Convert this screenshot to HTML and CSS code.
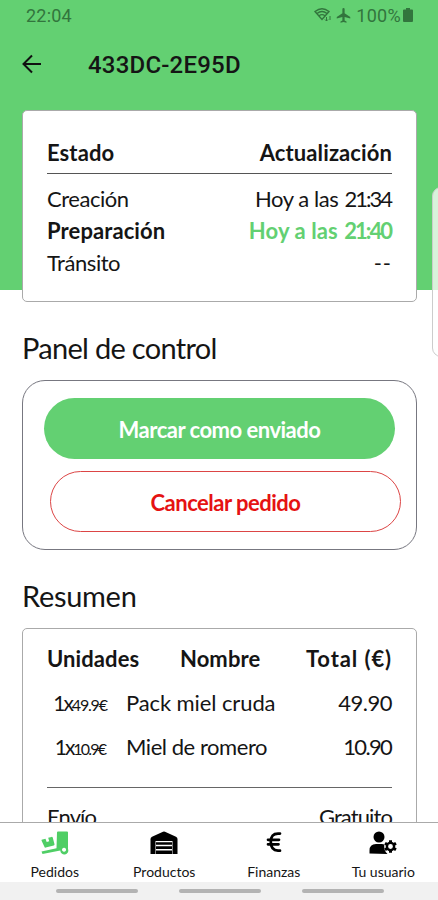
FILE: index.html
```
<!DOCTYPE html>
<html lang="es">

<head>
  <meta charset="UTF-8">
  <meta name="viewport" content="width=device-width, initial-scale=1.0">
  <title>Pedido 433DC-2E95D</title>
  <link rel="stylesheet" href="styles.css">
</head>

<body>
  <div class="app">
    <header>
      <div class="status">
        <span class="time">22:04</span>
        <svg class="wifi" viewBox="0 0 18 16" width="18" height="16">
          <g fill="none" stroke="currentColor" stroke-width="1.4">
            <path d="M1 4.500Q8-1 15 4.500L8 12.500z" />
            <path d="M3 6.500Q8 2.500 13 6.500M5 8.800Q8 6.500 11 8.800" />
            <path d="M12.500 10v4M11 12.500l1.500 1.500 1.500-1.500M16 13V9" stroke-width="1" />
          </g>
        </svg>
        <svg class="plane" viewBox="2 2 20 20" width="15" height="15">
          <path fill="currentColor" d="M21 16v-2l-7.500-5V3.500a1.500 1.500 0 0 0-3 0V9L3 14v2l7.500-2v4.500L8 20v1.500l4-1 4 1V20l-2.500-1.500V14z" />
        </svg>
        <span class="percent">100%</span>
        <svg class="battery" viewBox="0 0 10 14" width="10" height="14">
          <path fill="currentColor" d="M3 0h4v1.500h2q1 0 1 1V13q0 1-1 1H1q-1 0-1-1V2.500q0-1 1-1h2z" />
        </svg>
      </div>
      <div class="title">
        <svg viewBox="0 0 20 20" width="20" height="20">
          <path d="M19 10H2M10 1.500L1.500 10l8.500 8.500" fill="none" stroke="#111" stroke-width="2" />
        </svg>
        <h1>433DC-2E95D</h1>
      </div>
    </header>

    <main>
      <section class="card states">
        <div class="row head"><span>Estado</span><span>Actualización</span></div>
        <div class="row"><span>Creación</span><span>Hoy a las <b class="hour">21:34</b></span></div>
        <div class="row current"><span>Preparación</span><span class="date">Hoy a las <b class="hour">21:40</b></span></div>
        <div class="row"><span>Tránsito</span><span class="dashes">--</span></div>
      </section>

      <h2 class="control">Panel de control</h2>
      <section class="panel">
        <button class="send">Marcar como enviado</button>
        <button class="cancel">Cancelar pedido</button>
      </section>

      <h2>Resumen</h2>
      <section class="card summary">
        <div class="row head"><span>Unidades</span><span class="name">Nombre</span><span class="total">Total (€)</span></div>
        <div class="item"><span class="units">1x<small>49.9€</small></span><span>Pack miel cruda</span><span class="price">49.90</span></div>
        <div class="item"><span class="units second">1x<small>10.9€</small></span><span class="tight">Miel de romero</span><span class="price second">10.90</span></div>
        <hr>
        <div class="row shipping"><span>Envío</span><span>Gratuito</span></div>
      </section>
    </main>

    <nav>
      <a class="active">
        <svg viewBox="0 0 28 24" width="28" height="24">
          <path fill="currentColor" d="M16 1.500q0-1 1-1h9q1 0 1 1V18a4 4 0 1 1-7.700 1.500L1.500 23 .5 20.500 15.500 17.200zM23 16.700a2 2 0 1 0 .1 0z" fill-rule="evenodd" />
          <path fill="currentColor" d="M1.500 8.500l3-.8 1.200 3.300 2.500-.7-1-3.600 3.300-.8q1-.2 1.300.8l1.700 6.600q.2 1-.8 1.300l-8 2q-1 .2-1.300-.8L.5 9.500q-.2-.8 1-1z" />
        </svg>
        <span>Pedidos</span>
      </a>
      <a>
        <svg viewBox="0 0 28 24" width="28" height="24">
          <path fill="#000" d="M.5 23V8q0-1.500 1.500-2.200L13 .8q1-.5 2 0l11 5Q27.500 6.500 27.500 8v15h-5V10h-17v13z" />
          <path fill="#000" d="M6 11.300h16v2.500H6zM6 15.200h16v2.800H6zM6 19.400h16V23H6z" />
        </svg>
        <span>Productos</span>
      </a>
      <a>
        <svg viewBox="0 0 28 24" width="28" height="24">
          <path d="M20 2.600h-2Q10.800 2.600 10.800 11t7.200 8.700h2M8 8.800h11M8 13.300h10.500" fill="none" stroke="#000" stroke-width="2.700" stroke-linecap="round" />
        </svg>
        <span>Finanzas</span>
      </a>
      <a>
        <svg viewBox="0 0 28 24" width="28" height="24">
          <circle cx="10" cy="6" r="5.500" />
          <path d="M.5 22.500v-3Q.5 13 7 13h6q1.300 0 2.300.4-.8 6 3.200 9.600z" />
          <g fill="none" stroke="#000">
            <circle cx="21.500" cy="15.500" r="3.600" stroke-width="2.400" />
            <path d="M21.500 9.200v2.600M21.500 19.200v2.600M16 12.300l2.300 1.300M24.700 17.400l2.300 1.300M16 18.700l2.300-1.300M24.700 13.600l2.300-1.300" stroke-width="3" />
          </g>
        </svg>
        <span>Tu usuario</span>
      </a>
    </nav>
    <div class="system"><i></i><i></i><i></i></div>
    <div class="edge"></div>
  </div>
</body>

</html>
```
FILE: styles.css
```
* {
  box-sizing: border-box;
}

body {
  margin: 0;
  font-family: Lato, "Liberation Sans", sans-serif;
  color: #151515;
  background: #fff;
}

.app {
  position: relative;
  display: flex;
  flex-direction: column;
  height: 900px;
  overflow: hidden;
}

header {
  flex: none;
  height: 290px;
  background: #63d072;
  font-family: Roboto, sans-serif;
}

.status {
  display: flex;
  align-items: center;
  height: 30px;
  padding: 0 25px 0 26px;
  font-size: 18px;
  color: #32753d;
}

.time {
  margin-right: auto;
  letter-spacing: .2px;
}

.plane {
  margin: 0 5px 0 4px;
}

.percent {
  letter-spacing: .3px;
}

.battery {
  margin-left: 2px;
}

.title {
  display: flex;
  align-items: center;
  height: 68px;
  padding-left: 22px;
}

.title h1 {
  margin: 2px 0 0 46px;
  font-size: 24px;
  font-weight: 500;
  letter-spacing: .2px;
}

main {
  flex: 1;
  min-height: 0;
  margin-top: -180px;
  padding: 0 21px 0 22px;
  overflow: hidden;
}

.card {
  padding: 26px 24px 22px;
  border: 1px solid #aaa;
  border-radius: 5px;
  background: #fff;
}

.row {
  display: flex;
  justify-content: space-between;
  height: 32px;
  line-height: 32px;
  font-size: 22px;
  letter-spacing: -.45px;
  white-space: nowrap;
}

.head,
.current {
  font-weight: bold;
  letter-spacing: .1px;
}

.states {
  height: 192px;
}

.states .head {
  height: 37px;
  margin-bottom: 9px;
  border-bottom: 1px solid #555;
}

.current .date {
  color: #63d072;
}

.hour {
  margin-left: 1px;
  font-weight: inherit;
  letter-spacing: -2px;
  margin-right: 1px;
}

.dashes {
  letter-spacing: 1px;
}

h2 {
  height: 40px;
  margin: 26px 0 12px;
  line-height: 40px;
  font-size: 29px;
  font-weight: normal;
  letter-spacing: -.3px;
}

.control {
  letter-spacing: -.7px;
}

.panel {
  height: 170px;
  padding: 17px 14px 0 21px;
  border: 1px solid #777780;
  border-radius: 23px;
}

button {
  display: block;
  width: 351px;
  height: 61px;
  padding: 2px 0 0;
  border: 0;
  border-radius: 31px;
  font: bold 22px Lato, sans-serif;
  letter-spacing: -.5px;
}

.send {
  background: #63d072;
  color: #fff;
}

.cancel {
  margin: 12px 0 0 6px;
  border: 1px solid #dc4545;
  background: #fff;
  color: #e51212;
}

.summary {
  height: 240px;
  padding-top: 14px;
}

.summary .head {
  margin-bottom: 6px;
}

.name {
  margin-right: 5px;
}

.total {
  letter-spacing: .9px;
}

.item {
  display: grid;
  grid-template-columns: 66px 1fr auto;
  column-gap: 13px;
  height: 44px;
  line-height: 44px;
  font-size: 22px;
  letter-spacing: -.1px;
  white-space: nowrap;
}

.tight {
  letter-spacing: -.45px;
}

.price {
  letter-spacing: -.5px;
}

.price.second {
  margin-right: 1px;
  letter-spacing: -1.700px;
}

.units {
  text-align: center;
  font-size: 21px;
  letter-spacing: -2px;
}

.units small {
  font-size: 16px;
  letter-spacing: -1.200px;
}

.units.second small {
  letter-spacing: -1.800px;
}

.summary hr {
  height: 1px;
  margin: 18px 0 13px;
  border: 0;
  background: #666;
}

.shipping {
  letter-spacing: -.9px;
}

nav {
  display: flex;
  flex: none;
  height: 60px;
  border-top: 1px solid #aaa;
  background: #fff;
}

nav a {
  display: flex;
  flex-direction: column;
  align-items: center;
  width: 109.500px;
  padding-top: 8px;
  font-size: 14px;
  line-height: 17px;
}

nav svg {
  margin-bottom: 8px;
}

.active svg {
  color: #4fce65;
}

.system {
  display: flex;
  flex: none;
  gap: 41px;
  height: 18px;
  padding: 7px 0 0 56px;
  background: #f1f1f1;
}

.system i {
  width: 82px;
  height: 4px;
  border-radius: 2px;
  background: #b3b3b3;
}

.edge {
  position: absolute;
  top: 187px;
  left: 432px;
  width: 20px;
  height: 170px;
  border: 1px solid #ccc;
  border-radius: 9px;
  background: rgba(255, 255, 255, .75);
}
```
